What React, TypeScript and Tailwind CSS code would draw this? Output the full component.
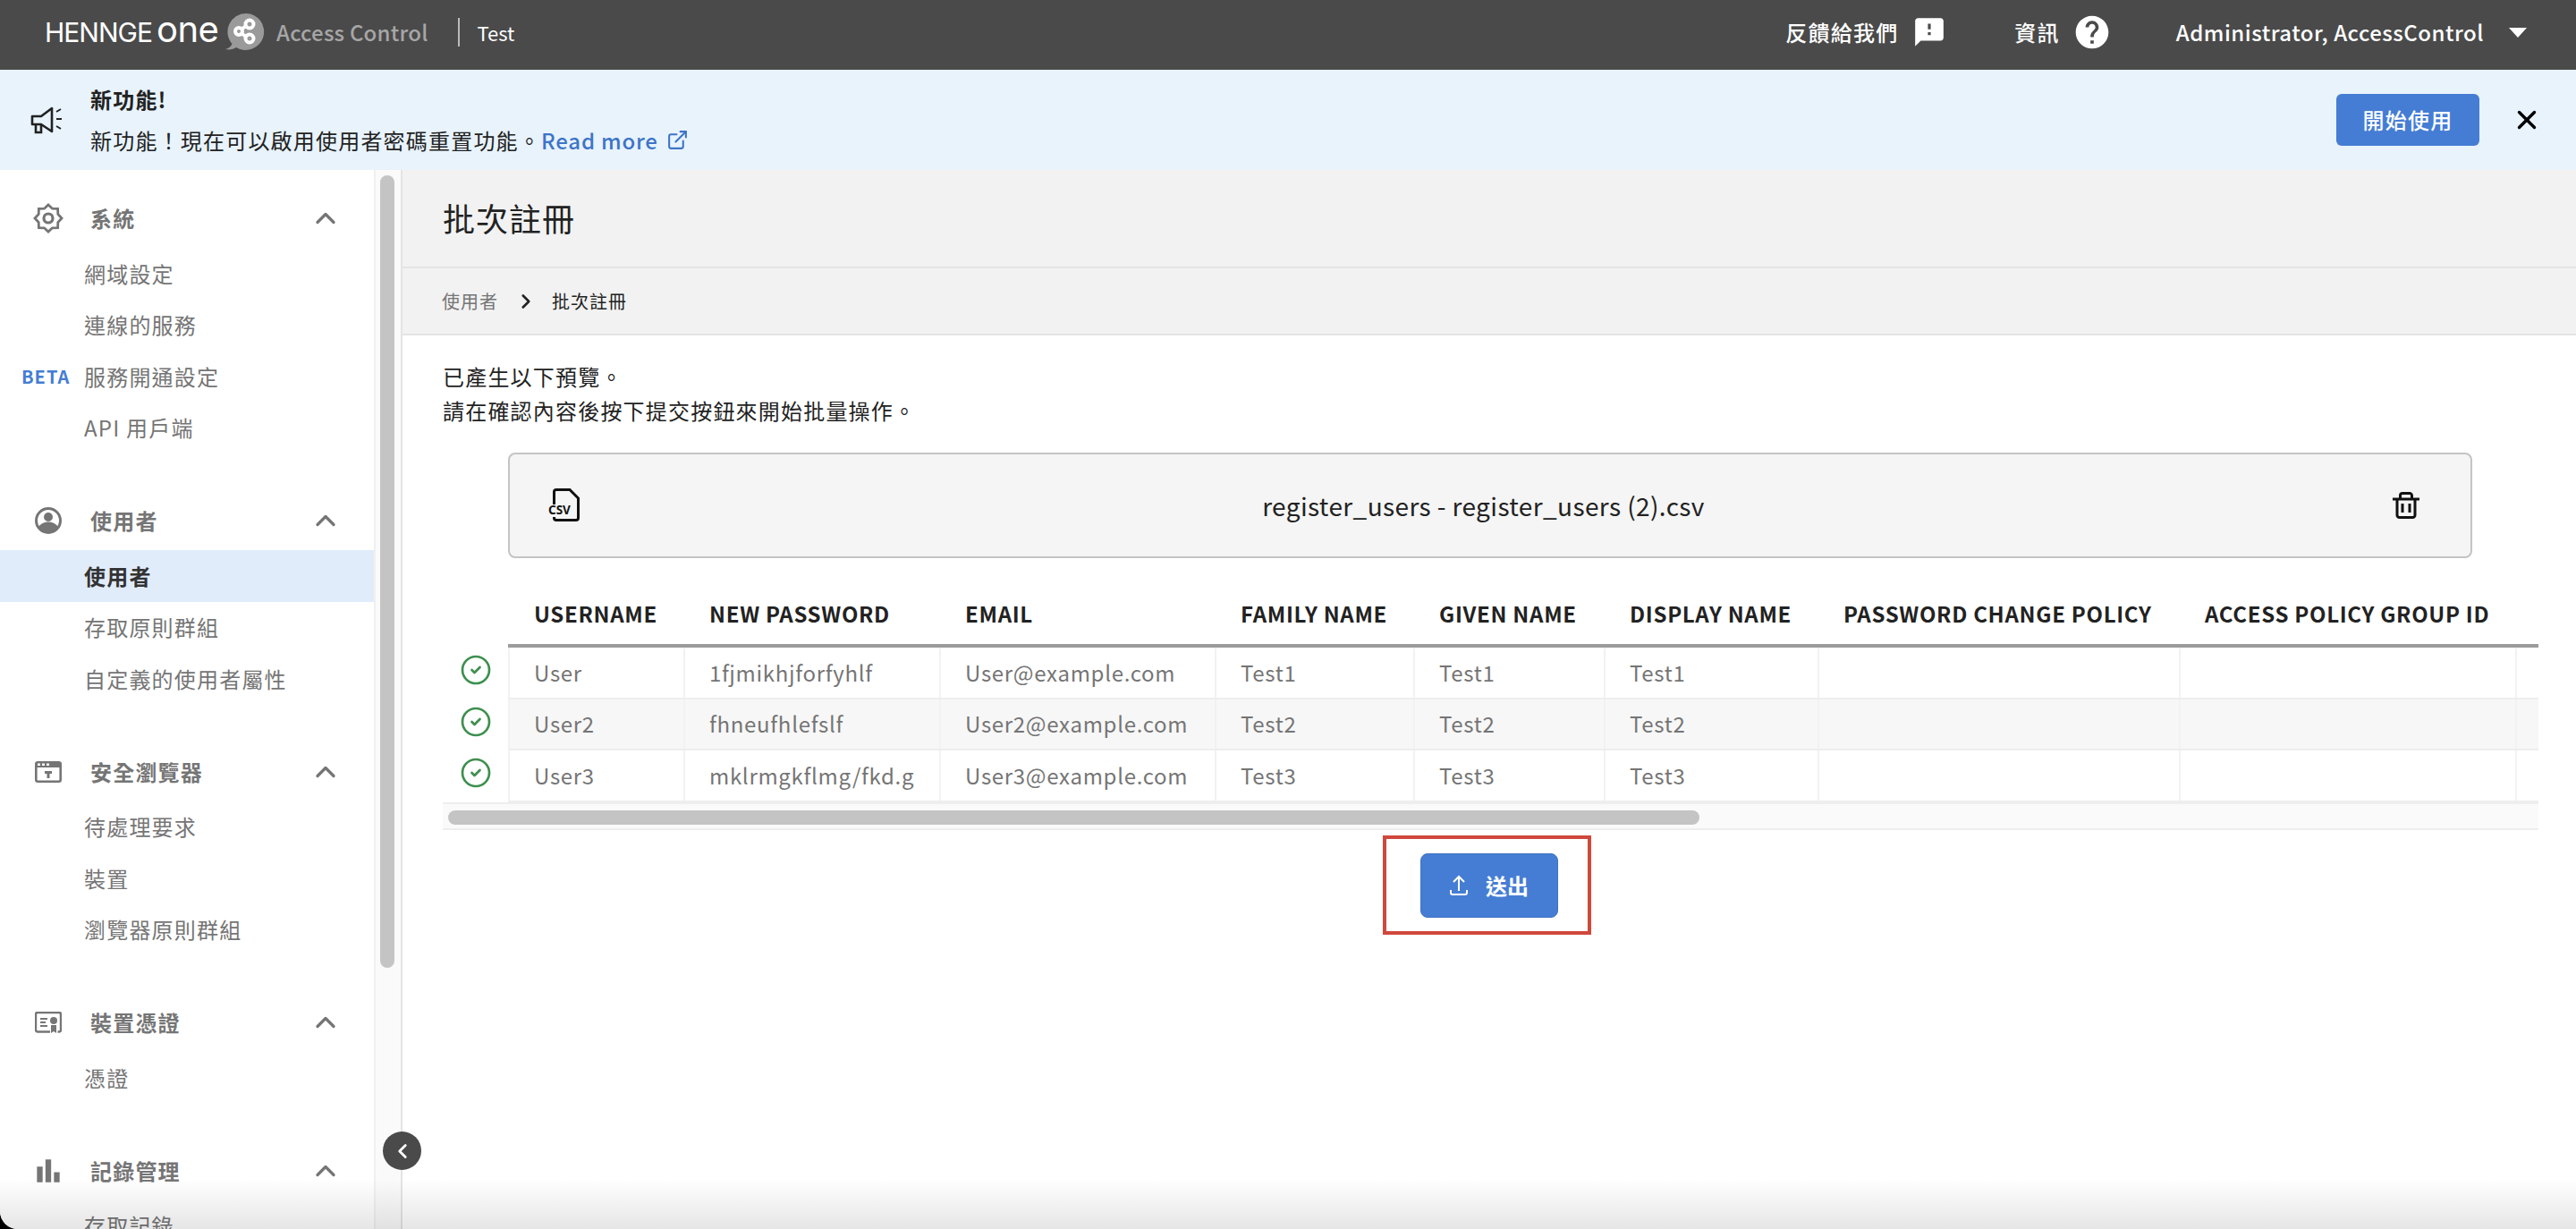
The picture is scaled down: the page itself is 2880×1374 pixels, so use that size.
import { ChevronUp, ChevronLeft, ChevronRight, CircleCheck, ExternalLink, X } from "lucide-react";
import { MdBarChart, MdFeedback, MdHelp } from "react-icons/md";

const cjk = "font-['Noto_Sans_CJK_TC','Noto_Sans',sans-serif]";

function GearIcon() {
  return (
    <svg viewBox="0 0 34 34" className="w-[34px] h-[34px]" fill="none" stroke="currentColor" strokeWidth="2.800">
      <path d="M17 2l4.500 4.200 6.100.200.200 6.100L32 17l-4.200 4.500-.200 6.100-6.100.200L17 32l-4.500-4.200-6.100-.200-.200-6.100L2 17l4.200-4.500.200-6.100 6.100-.200z" />
      <circle cx="17" cy="17" r="5" strokeWidth="3.200" />
    </svg>
  );
}

function UserIcon() {
  return (
    <svg viewBox="0 0 30 30" className="w-[30px] h-[30px]">
      <circle cx="15" cy="15" r="13.5" fill="none" stroke="currentColor" strokeWidth="3" />
      <circle cx="15" cy="11" r="5" fill="currentColor" />
      <path d="M4 22c3-4 7-5.5 11-5.5S23 18 26 22c-2.5 4-6.500 6.500-11 6.500S6.500 26 4 22z" fill="currentColor" />
    </svg>
  );
}

function BrowserIcon() {
  return (
    <svg viewBox="0 0 30 24" className="w-[30px] h-[24px]">
      <rect x="1.300" y="1.300" width="27.400" height="21.400" rx="2" fill="none" stroke="currentColor" strokeWidth="2.600" />
      <rect x="1" y="1" width="28" height="6" fill="currentColor" />
      <rect x="3" y="2.500" width="3" height="2.500" fill="#fff" />
      <rect x="8" y="2.500" width="3" height="2.500" fill="#fff" />
      <rect x="13" y="2.500" width="3" height="2.500" fill="#fff" />
      <path d="M11 11h8v3h-2.500v5h-3v-5H11z" fill="currentColor" />
    </svg>
  );
}

function CertIcon() {
  return (
    <svg viewBox="0 0 30 24" className="w-[30px] h-[24px]">
      <path d="M17 22.500H3a2 2 0 0 1-2-2V3a2 2 0 0 1 2-2h24a2 2 0 0 1 2 2v17.500a2 2 0 0 1-2 2h-1.500" fill="none" stroke="currentColor" strokeWidth="2.400" />
      <path d="M6 7h8v2H6zM6 11h6v2H6zM6 15h8v2H6z" fill="currentColor" />
      <circle cx="21" cy="10" r="4" fill="currentColor" />
      <path d="M18 15h6v9l-3-2-3 2z" fill="currentColor" />
    </svg>
  );
}

function Megaphone() {
  return (
    <svg viewBox="0 0 36 32" className="w-[36px] h-[32px]" fill="none" stroke="#222" strokeWidth="2.600">
      <path d="M2 12h10L24 3v26L12 21H2z" strokeLinejoin="round" />
      <path d="M6 21v9h6v-9" />
      <path d="M29 7l5-3M29 15h6M29 23l5 3" strokeWidth="2" />
    </svg>
  );
}

function CsvIcon() {
  return (
    <svg viewBox="0 0 36 38" className="w-[36px] h-[38px]">
      <path d="M6.500 18V4a2.500 2.500 0 0 1 2.500-2.500h15L33.500 11v22a2.500 2.500 0 0 1-2.500 2.500H9A2.500 2.500 0 0 1 6.500 33v-1" fill="none" stroke="#111" strokeWidth="3" />
      <text x="0" y="29" fontSize="13.500" fontWeight="700" fill="#111" fontFamily="Noto Sans">CSV</text>
    </svg>
  );
}

function TrashIcon() {
  return (
    <svg viewBox="0 0 30 30" className="w-[30px] h-[30px]" fill="none" stroke="#111" strokeWidth="3">
      <path d="M0 8h30" />
      <path d="M8.500 8V4a2.500 2.500 0 0 1 2.500-2.500h8A2.500 2.500 0 0 1 21.500 4v4" />
      <path d="M5 8v18a2.500 2.500 0 0 0 2.500 2.500h15A2.500 2.500 0 0 0 25 26V8" />
      <path d="M11 13v10M19 13v10" />
    </svg>
  );
}

function UploadIcon() {
  return (
    <svg viewBox="0 0 20 24" className="w-[20px] h-[24px]" fill="none" stroke="#fff" strokeWidth="2">
      <path d="M10 18V2M4 8l6-6 6 6" />
      <path d="M1 17v3a2 2 0 0 0 2 2h14a2 2 0 0 0 2-2v-3" />
    </svg>
  );
}

function Logo() {
  return (
    <svg viewBox="0 0 46 44" className="w-[46px] h-[44px]">
      <path d="M25 1a20.500 20.500 0 1 1-11 38c-3 2-7 3-12 2 4-1 6-3 7.500-6A20.500 20.500 0 0 1 25 1z" fill="#9a9a9a" />
      <g fill="none" stroke="#fff" strokeWidth="4">
        <circle cx="17" cy="21" r="4" />
        <circle cx="29" cy="13" r="4.500" />
        <circle cx="29" cy="29" r="4.500" />
        <path d="M21 18l4-3M21 24l4 3" />
      </g>
    </svg>
  );
}

type Section = { title: string; icon: React.ReactNode; items: { label: string; active?: boolean; beta?: boolean }[] };

const SECTIONS: Section[] = [
  {
    title: "系統",
    icon: <GearIcon />,
    items: [{ label: "網域設定" }, { label: "連線的服務" }, { label: "服務開通設定", beta: true }, { label: "API 用戶端" }],
  },
  {
    title: "使用者",
    icon: <UserIcon />,
    items: [{ label: "使用者", active: true }, { label: "存取原則群組" }, { label: "自定義的使用者屬性" }],
  },
  {
    title: "安全瀏覽器",
    icon: <BrowserIcon />,
    items: [{ label: "待處理要求" }, { label: "裝置" }, { label: "瀏覽器原則群組" }],
  },
  { title: "裝置憑證", icon: <CertIcon />, items: [{ label: "憑證" }] },
  { title: "記錄管理", icon: <MdBarChart size={38} />, items: [{ label: "存取記錄" }] },
];

const COLUMNS = [
  { name: "USERNAME", w: "w-[196px]" },
  { name: "NEW PASSWORD", w: "w-[286px]" },
  { name: "EMAIL", w: "w-[308px]" },
  { name: "FAMILY NAME", w: "w-[222px]" },
  { name: "GIVEN NAME", w: "w-[213px]" },
  { name: "DISPLAY NAME", w: "w-[239px]" },
  { name: "PASSWORD CHANGE POLICY", w: "w-[404px]" },
  { name: "ACCESS POLICY GROUP ID", w: "w-[376px]" },
  { name: "", w: "w-[200px]" },
];

const ROWS = [
  ["User", "1fjmikhjforfyhlf", "User@example.com", "Test1", "Test1", "Test1", "", "", ""],
  ["User2", "fhneufhlefslf", "User2@example.com", "Test2", "Test2", "Test2", "", "", ""],
  ["User3", "mklrmgkflmg/fkd.g", "User3@example.com", "Test3", "Test3", "Test3", "", "", ""],
];

function Sidebar() {
  return (
    <div className="relative w-[450px] shrink-0 flex bg-white border-r-2 border-[#e4e4e4]">
      <div className="w-[420px] shrink-0 pt-[21px] overflow-hidden border-r-2 border-[#f0f0f0]">
        {SECTIONS.map((s) => (
          <div key={s.title} className="mb-[42px]">
            <div className="h-[66px] flex items-center text-[#757575]">
              <div className="w-[101px] flex justify-center pl-[7px] shrink-0">{s.icon}</div>
              <span className="text-[24px] font-bold tracking-[1.2px] flex-1">{s.title}</span>
              <ChevronUp size={36} strokeWidth={2.200} className="mr-[36px]" />
            </div>
            {s.items.map((item) => (
              <div
                key={item.label}
                className={`relative h-[57.5px] flex items-center pl-[94px] text-[24px] tracking-[1.2px] ${
                  item.active ? "bg-[#e1ecfb] text-[#333] font-bold" : "text-[#757575]"
                }`}
              >
                {item.beta && <span className="absolute left-[24px] text-[20px] font-bold text-[#457dd4] tracking-[1px]">BETA</span>}
                {item.label}
              </div>
            ))}
          </div>
        ))}
      </div>
      <div className="flex-1 bg-[#fafafa] pt-[6px] pl-[5px]">
        <div className="w-[16px] h-[886px] rounded-full bg-[#c4c4c4]" />
      </div>
      <button className="absolute left-[428px] top-[1075px] w-[43px] h-[43px] rounded-full bg-[#4a4a4a] flex items-center justify-center text-white z-10">
        <ChevronLeft size={26} strokeWidth={2.600} />
      </button>
    </div>
  );
}

export default function App() {
  return (
    <div className={`relative h-[1374px] w-full overflow-hidden bg-black ${cjk}`}>
      <div className="h-full bg-white rounded-bl-[20px] overflow-hidden flex flex-col">
        <header className="h-[78px] shrink-0 bg-[#4a4a4a] flex items-center text-white pb-[6px]">
          <div className="ml-[50px] flex items-center">
            <span className="font-['Inter',sans-serif] font-normal text-[30px] tracking-[-1px] w-[125px]">HENNGE</span>
            <span className="font-['Inter',sans-serif] font-normal text-[40px] leading-none tracking-[-0.5px] w-[75px] pb-[6px]">one</span>
            <Logo />
          </div>
          <span className="ml-[13px] text-[24px] font-medium text-[#a6a6a6] tracking-[0.2px]">Access Control</span>
          <span className="ml-[33px] w-[2px] h-[32px] bg-[#bbb]" />
          <span className="ml-[20px] text-[22px]">Test</span>
          <div className="flex-1" />
          <span className="text-[24px] font-medium tracking-[1.2px]">反饋給我們</span>
          <MdFeedback size={38} className="ml-[16px]" />
          <span className="ml-[76px] text-[24px] font-medium tracking-[1.2px]">資訊</span>
          <MdHelp size={44} className="ml-[14px]" />
          <span className="ml-[72px] text-[24px] font-medium tracking-[0.5px]">Administrator, AccessControl</span>
          <span className="ml-[28px] mr-[55px] w-0 h-0 border-x-[10px] border-x-transparent border-t-[11px] border-t-white" />
        </header>

        <div className="h-[112px] shrink-0 bg-[#e8f3fc] flex items-center pl-[34px] pr-[38px]">
          <Megaphone />
          <div className="ml-[31px] flex-1 text-[#222]">
            <div className="text-[24px] font-bold leading-[34px] tracking-[1.2px]">新功能!</div>
            <div className="text-[24px] leading-[36px] mt-[11px] flex items-center tracking-[1.2px]">
              新功能！現在可以啟用使用者密碼重置功能。
              <span className="text-[#3e74c7] font-medium tracking-[0.8px]">Read more</span>
              <ExternalLink size={25} className="text-[#3e74c7] ml-[9px]" />
            </div>
          </div>
          <button className="w-[160px] h-[58px] rounded-[6px] bg-[#457dd4] text-white text-[24px] font-medium tracking-[1.2px]">開始使用</button>
          <X size={34} strokeWidth={2.400} className="ml-[36px] text-black" />
        </div>

        <div className="flex-1 flex min-h-0">
          <Sidebar />
          <main className="flex-1 min-w-0 bg-white">
            <div className="h-[110px] bg-[#f2f2f2] border-b-2 border-[#e4e4e4] flex items-center pl-[45px] pb-[2px]">
              <h1 className="text-[36px] font-normal text-[#222] tracking-[1px]">批次註冊</h1>
            </div>
            <div className="h-[75px] bg-[#f2f2f2] border-b-2 border-[#e4e4e4] flex items-center pl-[44px] text-[20px] tracking-[1px]">
              <span className="text-[#757575]">使用者</span>
              <ChevronRight size={26} strokeWidth={2.400} className="ml-[18px] text-[#222]" />
              <span className="ml-[16px] text-[#222]">批次註冊</span>
            </div>
            <div className="pl-[45px] pr-[42px] pt-[27px]">
              <p className="text-[24px] leading-[38px] text-[#222] tracking-[1.2px]">
                已產生以下預覽。
                <br />
                請在確認內容後按下提交按鈕來開始批量操作。
              </p>
              <div className="ml-[73px] mr-[74px] mt-[28px] h-[118px] bg-[#f5f5f5] border-2 border-[#c4c4c4] rounded-[8px] flex items-center justify-between pl-[43px] pr-[57px]">
                <CsvIcon />
                <span className="text-[28px] text-[#222] tracking-[0.4px] mr-[7px]">register_users - register_users (2).csv</span>
                <TrashIcon />
              </div>
              <div className="mt-[26px] overflow-hidden">
                <div className="flex">
                  <div className="w-[73px] shrink-0 pt-[74px] flex flex-col items-center">
                    {ROWS.map((r) => (
                      <div key={r[0]} className="h-[57.5px] flex justify-center pt-[7px]">
                        <CircleCheck size={36} strokeWidth={1.800} className="text-[#3f8f4f]" />
                      </div>
                    ))}
                  </div>
                  <div className="w-[2444px] shrink-0">
                    <div className="flex h-[74px] items-center border-b-4 border-[#9b9b9b] pt-[2px]">
                      {COLUMNS.map((c) => (
                        <div key={c.name} className={`${c.w} shrink-0 pl-[29px] text-[24px] font-bold text-[#222] tracking-[0.7px] whitespace-nowrap`}>
                          {c.name}
                        </div>
                      ))}
                    </div>
                    {ROWS.map((r, i) => (
                      <div key={r[0]} className={`flex h-[57.5px] border-b-2 border-[#eeeeee] ${i === 1 ? "bg-[#f7f7f7]" : "bg-white"}`}>
                        {r.map((v, j) => (
                          <div
                            key={j}
                            className={`${COLUMNS[j].w} shrink-0 flex items-center pl-[27px] text-[24px] text-[#757575] tracking-[0.7px] border-l-2 border-[#f2f2f2] whitespace-nowrap`}
                          >
                            {v}
                          </div>
                        ))}
                      </div>
                    ))}
                  </div>
                </div>
                <div className="h-[31px] bg-[#fafafa] border-b-2 border-t-2 border-[#eeeeee] pt-[7px] pl-[6px]">
                  <div className="w-[1399px] h-[16px] rounded-full bg-[#c4c4c4]" />
                </div>
              </div>
              <div className="mt-[6px] flex justify-center pr-[8px]">
                <div className="border-4 border-[#d0483c] pl-[38px] pr-[33px] pt-[16px] pb-[15px]">
                  <button className="w-[154px] h-[72px] rounded-[8px] bg-[#457dd4] border border-[#3e72c2] flex items-center justify-center gap-[20px] text-white text-[24px] font-bold">
                    <UploadIcon />
                    送出
                  </button>
                </div>
              </div>
            </div>
          </main>
        </div>
      </div>
      <div className="absolute left-0 right-0 bottom-0 h-[56px] bg-gradient-to-t from-black/10 to-transparent pointer-events-none" />
    </div>
  );
}
